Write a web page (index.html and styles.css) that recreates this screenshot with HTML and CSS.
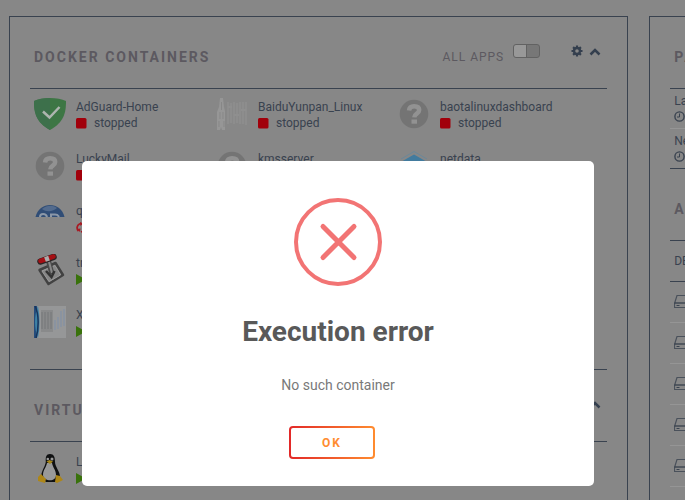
FILE: index.html
```html
<!DOCTYPE html>
<html lang="en">
<head>
<meta charset="utf-8">
<title>Dashboard</title>
<link rel="stylesheet" href="styles.css">
</head>
<body>
<svg class="defs" aria-hidden="true">
  <symbol id="question" viewBox="0 0 32 32"><circle cx="16" cy="16" r="14.3" fill="#747474"/><path d="M11 12.500c.3-3 2.200-4.200 5.200-4.200 3 0 5 1.300 5 3.800 0 3.800-4.800 3.400-4.900 7.300" fill="none" stroke="#929292" stroke-width="4.500"/><path d="M13.500 21.500h5.500v4.200h-5.500z" fill="#929292"/></symbol>
  <symbol id="stop" viewBox="0 0 11 11"><rect x="0" y="0" width="10.500" height="10.500" rx="1.500" fill="#a1000b"/></symbol>
  <symbol id="play" viewBox="0 0 11 11"><path d="M0 0l10 5.500L0 11z" fill="#39720b"/></symbol>
  <symbol id="chevron" viewBox="0 0 12 12"><path d="M1.500 8.500L6 4l4.500 4.500" fill="none" stroke="#343f4e" stroke-width="2.500"/></symbol>
  <symbol id="clock" viewBox="0 0 11 11"><circle cx="5.500" cy="5.500" r="4.600" fill="none" stroke="#39424f" stroke-width="1.400"/><path d="M5.500 2.500v3.500h-2.500" fill="none" stroke="#39424f"/></symbol>
  <symbol id="drive" viewBox="0 0 18 16"><path d="M.5 9.500L3 1.500h12l2.500 8v4H.5z" fill="none" stroke="#4a515b" stroke-width="1.200"/><path d="M.5 9h17" stroke="#303a47" stroke-width="1.200"/><path d="M2.500 11.500h3" stroke="#39424f"/></symbol>
</svg>
<main class="board">
  <div class="panel">
    <header class="bar">
      <h2>DOCKER CONTAINERS</h2>
      <label class="all" for="all">ALL APPS</label>
      <input class="switch" type="checkbox" id="all">
      <button class="tool gear" aria-label="Settings"><svg viewBox="0 0 12 12"><circle cx="6" cy="6" r="3" fill="none" stroke="#343f4e" stroke-width="2.400"/><path d="M6 .5v2M6 9.500v2M.5 6h2M9.500 6h2M2.100 2.100l1.400 1.400M8.500 8.500l1.400 1.400M9.900 2.100L8.500 3.500M3.500 8.500L2.100 9.900" stroke="#343f4e" stroke-width="2.200"/></svg></button>
      <button class="tool" aria-label="Collapse containers"><svg><use href="#chevron"/></svg></button>
    </header>
    <div class="apps">
      <div class="app"><svg class="pic" viewBox="0 0 32 32"><path d="M16 0C10 0 4 1 0 3c0 12 2 21 16 29C30 24 32 15 32 3 28 1 22 0 16 0z" fill="#3d7644"/><path d="M16 0C10 0 4 1 0 3c0 12 2 21 16 29z" fill="#3d704b"/><path d="M9 13.500l6.500 6L25.500 9" fill="none" stroke="#aeb5af" stroke-width="2.500"/></svg><div><span>AdGuard-Home</span><span class="state"><svg><use href="#stop"/></svg>stopped</span></div></div>
      <div class="app"><svg class="pic" viewBox="0 0 32 32"><path d="M4 0h3l1 9 1 4v19H6l-1-3-1 3H1V14l2-5z" fill="#969696"/><path d="M4 14v7M7 14v7M5.500 4v8M3 23v6M8 23v6" stroke="#878787"/><path d="M12 4v22M15 5v20M18 4v22M21 5v20M24 4v22M27 4v22M30 4v23" stroke="#8d8d8d" stroke-width="2.200"/><path d="M12 9h4M18 17h5M25 12h5" stroke="#8f8f8f" stroke-width="2"/></svg><div><span>BaiduYunpan_Linux</span><span class="state"><svg><use href="#stop"/></svg>stopped</span></div></div>
      <div class="app"><svg class="pic"><use href="#question"/></svg><div><span>baotalinuxdashboard</span><span class="state"><svg><use href="#stop"/></svg>stopped</span></div></div>
      <div class="app"><svg class="pic"><use href="#question"/></svg><div><span>LuckyMail</span><span class="state"><svg><use href="#stop"/></svg>stopped</span></div></div>
      <div class="app"><svg class="pic"><use href="#question"/></svg><div><span>kmsserver</span><span class="state"><svg><use href="#stop"/></svg>stopped</span></div></div>
      <div class="app"><svg class="pic" viewBox="0 0 32 32"><path d="M16 4.500l14 8v14l-14 6-14-6v-14z" fill="#427b9e"/><path d="M3 9l13-7.500L29 9" fill="none" stroke="#6c8799"/></svg><div><span>netdata</span><span class="state"><svg><use href="#stop"/></svg>stopped</span></div></div>
      <div class="app solo"><svg class="pic" viewBox="0 0 32 32"><path d="M1.500 15C5-1 27-1 30.500 15z" fill="#304d76"/><path d="M8 7c5-4 11-4 15-1-3 3-10 5-15 1z" fill="#536b8d"/><path d="M6 15c0-4 6-4 7 0M17 15v-2.500h4c3 0 3 1 4 2.500" fill="none" stroke="#8c98a8" stroke-width="2"/></svg><div><span>qbittorrent</span><span class="state"><svg viewBox="0 0 11 11"><path d="M2.500 9A4.300 4.300 0 0 1 3.500 2l2-.7M8.500 2A4.300 4.300 0 0 1 7.500 9L5 10" fill="none" stroke="#a81923" stroke-width="1.800"/><path d="M4 0l3 1.500L4.500 4zM1 7l3.500-.5L4 10z" fill="#a81923"/></svg>unhealthy</span></div></div>
      <div class="app solo"><svg class="pic" viewBox="0 0 32 32"><path d="M5.500 16l16-7 7.500 12-14.500 9z" fill="#868686" stroke="#424242" stroke-width="2.500" stroke-linejoin="round"/><path d="M8 17l13-5.500L26.500 21 15 27.500z" fill="none" stroke="#999"/><path d="M14 5l4 15" stroke="#4a4a4a" stroke-width="5"/><path d="M14.500 6l3.500 13" stroke="#888" stroke-width="2"/><path d="M12 17l5.500 6 3-6" fill="none" stroke="#333" stroke-width="2.500"/><path d="M6.500 7.500l13-4.500" stroke="#2b2525" stroke-width="6.500" stroke-linecap="round"/><path d="M6.500 7l13-4.500" stroke="#a40f14" stroke-width="4.500" stroke-linecap="round"/><path d="M11 5.500l4-1.400" stroke="#aaa" stroke-width="5"/></svg><div><span>transmission</span><span class="state"><svg><use href="#play"/></svg>started</span></div></div>
      <div class="app solo"><svg class="pic" viewBox="0 0 32 32"><path d="M0 0h32v32H0z" fill="#969798"/><path d="M0 0h3l2 16-2 16H0z" fill="#244c7c"/><path d="M4 0c-4 10-4 22 0 32 2-10 2-22 0-32" fill="#3d82a6"/><path d="M1 0c4 8 4 22 1 32" fill="none" stroke="#18345c" stroke-width="1.500"/><path d="M7 4h12v22H7z" fill="#898a8b"/><path d="M8 6v17M11 6v17M14 6v17M17 6v17" stroke="#747678"/><path d="M21 14v10M24 11v12M27 5v16M30 3v17" stroke="#8793a2" stroke-width="1.500"/></svg><div><span>Xunlei</span><span class="state"><svg><use href="#play"/></svg>started</span></div></div>
    </div>
    <header class="bar next">
      <h2>VIRTUAL MACHINES</h2>
      <button class="tool" aria-label="Collapse machines"><svg><use href="#chevron"/></svg></button>
    </header>
    <div class="apps vms">
      <div class="app"><svg class="pic" viewBox="0 0 32 32"><path d="M16 1c-4 0-4.500 3-4.200 8C11 14 7 18 7 25l5 4h10l4-5c0-6-5-10-5-15 0-5-1-8-5-8z" fill="#101112"/><path d="M13 10c-1 5-4 7-4 12 0 6 13 8 13 0 0-5-3-7-4-12z" fill="#999"/><circle cx="13.800" cy="6" r="1.300" fill="#999"/><circle cx="18" cy="6" r="1.500" fill="#999"/><path d="M12.500 8.500l3-1.500 3.500 1.500-3 2.500z" fill="#a78719"/><path d="M7 21l5 5-1 4-7-2v-4zM22 22l4 1 3 4-6 3-2-1z" fill="#ad8617"/></svg><div><span>Linux</span><span class="state"><svg><use href="#play"/></svg>started</span></div></div>
    </div>
  </div>
  <div class="panel">
    <header class="bar"><h2>PARITY</h2></header>
    <div class="check">Last check<svg><use href="#clock"/></svg></div>
    <div class="check last">Next check<svg><use href="#clock"/></svg></div>
    <header class="bar"><h2>ARRAY</h2></header>
    <div class="device head">DEVICE</div>
    <div class="device"><svg><use href="#drive"/></svg></div>
    <div class="device"><svg><use href="#drive"/></svg></div>
    <div class="device"><svg><use href="#drive"/></svg></div>
    <div class="device"><svg><use href="#drive"/></svg></div>
    <div class="device"><svg><use href="#drive"/></svg></div>
    <div class="device"><svg><use href="#drive"/></svg></div>
  </div>
</main>
<div class="overlay">
  <section class="dialog" role="alertdialog" aria-labelledby="t" aria-describedby="m">
    <svg class="error" viewBox="0 0 88 88"><circle cx="44" cy="44" r="42" fill="none" stroke="#f27474" stroke-width="4"/><path d="M29 28.500l31 31M60 28.500l-31 31" stroke="#f27474" stroke-width="5" stroke-linecap="round"/></svg>
    <h1 id="t">Execution error</h1>
    <p id="m">No such container</p>
    <button class="ok">OK</button>
  </section>
</div>
</body>
</html>
```
FILE: styles.css
```css
* { box-sizing: border-box; }
html, body { height: 100%; }
body {
  margin: 0;
  overflow: hidden;
  background: #878787;
  color: #39424f;
  font: 12px/16px Roboto, "Noto Sans", sans-serif;
}
h1, h2, p { margin: 0; }
button { padding: 0; border: 0; background: none; font: inherit; cursor: pointer; }
.defs { display: none; }

.board { display: flex; gap: 21px; height: 100%; padding: 16px 0 0 9px; overflow: hidden; }
.panel { flex: 0 0 90.4vw; min-height: 560px; padding: 0 20px; border: 1px solid #39424f; }

.bar { display: flex; height: 72px; padding: 30px 6px 0 4px; border-bottom: 1px solid #39424f; }
.bar.next { height: 73px; border-top: 1px solid #39424f; }
.bar h2 { flex: 1; color: #5c5960; font-size: 14px; line-height: 20px; letter-spacing: 2px; white-space: nowrap; }
.all { margin-right: 9px; color: #5c5960; line-height: 20px; letter-spacing: 1px; }
.switch {
  appearance: none;
  width: 27px;
  height: 14px;
  margin: -3px 31px 0 0;
  border: 1px solid #626262;
  border-radius: 3px;
  background: linear-gradient(to right, #989898 12px, #626262 12px, #626262 13px, #777 13px);
}
.tool { width: 12px; height: 12px; margin-top: -1px; }
.tool svg { display: block; width: 12px; height: 12px; }
.gear { margin: -2px 6px 0 0; }

.apps { display: grid; grid-template-columns: repeat(auto-fill, 182px); padding: 9px 4px 11px; }
.app { display: flex; gap: 10px; height: 52px; }
.app div { padding-top: 1px; }
.app span { display: block; white-space: nowrap; }
.app .state { display: flex; align-items: center; gap: 7px; }
.state svg { width: 11px; height: 11px; }
.pic { width: 32px; height: 32px; }
.solo { grid-column: 1; }
.vms { padding-top: 11px; }

.check { height: 40px; padding: 4px 4px 0; border-bottom: 1px solid #959595; }
.check.last { border-color: #39424f; }
.check svg { display: block; width: 11px; height: 11px; margin-top: 2px; }
.device { display: flex; align-items: center; height: 41px; padding-left: 4px; border-bottom: 1px solid #959595; }
.device.head { border-color: #39424f; }
.device svg { width: 18px; height: 16px; }

.overlay { position: fixed; inset: 0; padding: 161px 9px 0 0; }
.dialog {
  display: flex;
  flex-direction: column;
  align-items: center;
  width: 90%;
  max-width: 512px;
  margin: 0 auto;
  padding: 37px 20px 27px;
  border-radius: 5px;
  background: #fff;
}
.error { width: 88px; height: 88px; }
.dialog h1 { margin-top: 26px; color: #595959; font-size: 28px; font-weight: 700; line-height: 40px; }
.dialog p { margin-top: 23px; color: #797979; font-size: 14px; line-height: 20px; }
.ok {
  width: 86px;
  height: 33px;
  margin: 31px 12px 0 0;
  border: 2px solid transparent;
  border-radius: 4px;
  background: linear-gradient(#fff, #fff) padding-box, linear-gradient(to right, #e22828, #ff8c2f) border-box;
  color: #ff8c2f;
  font-size: 12px;
  font-weight: 700;
  letter-spacing: 2px;
}
```
